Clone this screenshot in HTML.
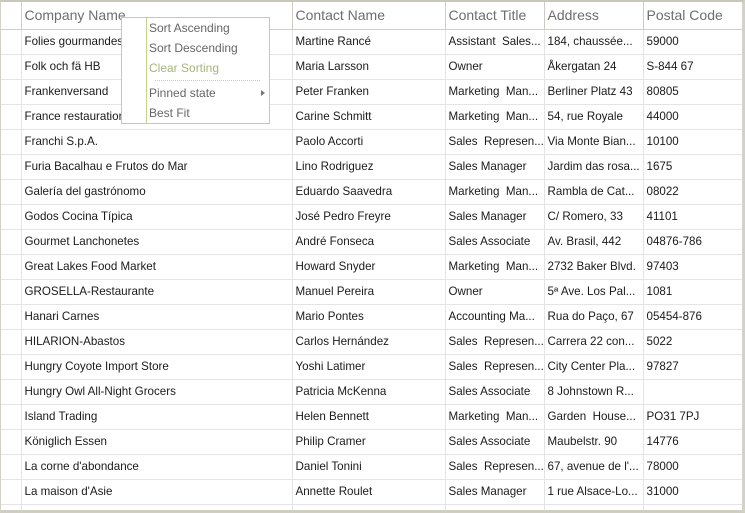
<!DOCTYPE html>
<html><head><meta charset="utf-8"><style>
*{margin:0;padding:0;box-sizing:border-box}
html,body{width:745px;height:513px;overflow:hidden}
body{background:#fff;font-family:"Segoe UI","Liberation Sans","DejaVu Sans",sans-serif;position:relative}
#g{position:absolute;left:0;top:0;width:745px;height:513px;overflow:hidden;border-top:2px solid #c9c7b9;border-left:1px solid #d4d2c6;border-right:3px solid #d4d2c6;border-bottom:3px solid #d0cec2}
table{border-collapse:collapse;table-layout:fixed;position:absolute;left:0;top:0;width:743px}
td,th{height:25px;border-bottom:1px solid #e4e4e4;border-right:1px solid #e4e4e4;font-size:11.6px;color:#1a1a1a;padding:0 0 0 3px;white-space:nowrap;overflow:hidden;font-weight:normal;text-align:left}
th{height:27px;font-size:14px;color:#6e6e6e;border-bottom:1px solid #cfcdc1;border-right:1px solid #cfcdc1}
#m{position:absolute;left:121px;top:17px;width:149px;height:107px;background:#fff;border:1px solid #c8c6b4}
#m .s{position:absolute;left:24px;top:0;bottom:0;border-left:1px solid #c2d68a}
#m div.i{position:absolute;left:27px;font-size:12px;color:#666}
#m .sep{position:absolute;left:33px;width:105px;top:62px;border-top:1px dotted #c2d68a}
</style></head><body>
<div id="g">
<table>
<colgroup><col style="width:20px"><col style="width:271px"><col style="width:153px"><col style="width:99px"><col style="width:99px"><col style="width:101px"></colgroup>
<tr><th></th><th>Company Name</th><th>Contact Name</th><th>Contact Title</th><th>Address</th><th>Postal Code</th></tr>
<tr><td></td><td>Folies gourmandes</td><td>Martine Rancé</td><td>Assistant&nbsp; Sales...</td><td>184, chaussée...</td><td>59000</td></tr>
<tr><td></td><td>Folk och fä HB</td><td>Maria Larsson</td><td>Owner</td><td>Åkergatan 24</td><td>S-844 67</td></tr>
<tr><td></td><td>Frankenversand</td><td>Peter Franken</td><td>Marketing&nbsp; Man...</td><td>Berliner Platz 43</td><td>80805</td></tr>
<tr><td></td><td>France restauration</td><td>Carine Schmitt</td><td>Marketing&nbsp; Man...</td><td>54, rue Royale</td><td>44000</td></tr>
<tr><td></td><td>Franchi S.p.A.</td><td>Paolo Accorti</td><td>Sales&nbsp; Represen...</td><td>Via Monte Bian...</td><td>10100</td></tr>
<tr><td></td><td>Furia Bacalhau e Frutos do Mar</td><td>Lino Rodriguez</td><td>Sales Manager</td><td>Jardim das rosa...</td><td>1675</td></tr>
<tr><td></td><td>Galería del gastrónomo</td><td>Eduardo Saavedra</td><td>Marketing&nbsp; Man...</td><td>Rambla de Cat...</td><td>08022</td></tr>
<tr><td></td><td>Godos Cocina Típica</td><td>José Pedro Freyre</td><td>Sales Manager</td><td>C/ Romero, 33</td><td>41101</td></tr>
<tr><td></td><td>Gourmet Lanchonetes</td><td>André Fonseca</td><td>Sales Associate</td><td>Av. Brasil, 442</td><td>04876-786</td></tr>
<tr><td></td><td>Great Lakes Food Market</td><td>Howard Snyder</td><td>Marketing&nbsp; Man...</td><td>2732 Baker Blvd.</td><td>97403</td></tr>
<tr><td></td><td>GROSELLA-Restaurante</td><td>Manuel Pereira</td><td>Owner</td><td>5ª Ave. Los Pal...</td><td>1081</td></tr>
<tr><td></td><td>Hanari Carnes</td><td>Mario Pontes</td><td>Accounting Ma...</td><td>Rua do Paço, 67</td><td>05454-876</td></tr>
<tr><td></td><td>HILARION-Abastos</td><td>Carlos Hernández</td><td>Sales&nbsp; Represen...</td><td>Carrera 22 con...</td><td>5022</td></tr>
<tr><td></td><td>Hungry Coyote Import Store</td><td>Yoshi Latimer</td><td>Sales&nbsp; Represen...</td><td>City Center Pla...</td><td>97827</td></tr>
<tr><td></td><td>Hungry Owl All-Night Grocers</td><td>Patricia McKenna</td><td>Sales Associate</td><td>8 Johnstown R...</td><td></td></tr>
<tr><td></td><td>Island Trading</td><td>Helen Bennett</td><td>Marketing&nbsp; Man...</td><td>Garden&nbsp; House...</td><td>PO31 7PJ</td></tr>
<tr><td></td><td>Königlich Essen</td><td>Philip Cramer</td><td>Sales Associate</td><td>Maubelstr. 90</td><td>14776</td></tr>
<tr><td></td><td>La corne d'abondance</td><td>Daniel Tonini</td><td>Sales&nbsp; Represen...</td><td>67, avenue de l'...</td><td>78000</td></tr>
<tr><td></td><td>La maison d'Asie</td><td>Annette Roulet</td><td>Sales Manager</td><td>1 rue Alsace-Lo...</td><td>31000</td></tr>
<tr><td></td><td></td><td></td><td></td><td></td><td></td></tr>
</table>
</div>
<div id="m"><div class="s"></div>
<div class="i" style="top:3px">Sort Ascending</div>
<div class="i" style="top:23px">Sort Descending</div>
<div class="i" style="top:43px;color:#a7b57a">Clear Sorting</div>
<div class="sep"></div>
<div class="i" style="top:68px">Pinned state</div>
<div style="position:absolute;left:139px;top:72px;width:0;height:0;border-left:4px solid #777;border-top:3px solid transparent;border-bottom:3px solid transparent"></div>
<div class="i" style="top:88px">Best Fit</div>
</div>
</body></html>
